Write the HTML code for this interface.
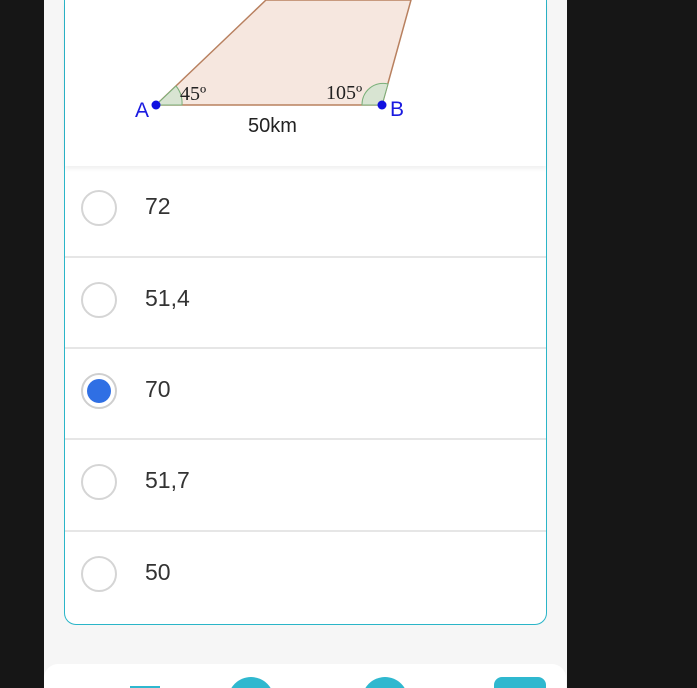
<!DOCTYPE html>
<html><head><meta charset="utf-8"><style>
html,body{margin:0;width:697px;height:688px;overflow:hidden}
body{background:#161616;font-family:"Liberation Sans",sans-serif}
.wrap{position:relative;width:697px;height:688px;overflow:hidden}
.phone{position:absolute;left:44px;top:0;width:523px;height:688px;background:#f6f6f6}
.card{position:absolute;left:64px;top:-20px;width:481px;height:644px;border:1.5px solid #2ab5c8;border-top:none;border-radius:0 0 12px 12px;background:#fff}
.fig{position:absolute;left:0;top:20px;width:481px;height:166px;box-shadow:0 3px 4px rgba(0,0,0,.06)}
.opt{position:absolute;left:0;width:481px;height:90px;border-top:2px solid #e6e6e6}
.r{position:absolute;left:16px;top:24px;width:36px;height:36px;border:2px solid #d5d5d5;border-radius:50%;box-sizing:border-box}
.t{position:absolute;left:80px;top:27px;font-size:23px;color:#333}
.nav{position:absolute;left:44px;top:664px;width:522px;height:40px;background:#fff;border-radius:14px}
</style></head><body><div class="wrap">
<div class="phone"></div>
<div class="card">
<div class="fig">
<svg width="481" height="146" style="position:absolute;left:0;top:0;overflow:visible">
<g transform="translate(-64,0)">
<polygon points="155,105 265,0 410,0 381,105" fill="#f6e7df" stroke="#b8805f" stroke-width="1.5"/>
<path d="M155,105 L175,86 A27 27 0 0 1 181,105 Z" fill="#d8e4d2" stroke="#7ab07a" stroke-width="1"/>
<path d="M381,105 L387,84 A21 21 0 0 0 361,105 Z" fill="#d8e4d2" stroke="#7ab07a" stroke-width="1"/>
<circle cx="155" cy="105" r="4.5" fill="#1010e0"/>
<circle cx="381" cy="105" r="4.5" fill="#1010e0"/>
<text x="134" y="117" font-size="21" fill="#1a1ae0" font-family="Liberation Sans">A</text>
<text x="389" y="116" font-size="21" fill="#1a1ae0" font-family="Liberation Sans">B</text>
<text x="179" y="100" font-size="20" fill="#222" font-family="Liberation Serif">45º</text>
<text x="325" y="99" font-size="20" fill="#222" font-family="Liberation Serif">105º</text>
<text x="247" y="132" font-size="20" fill="#222" font-family="Liberation Sans">50km</text>
</g>
</svg>
</div>
<div class="opt" style="top:186px;border-top:none"><div class="r"></div><div class="t">72</div></div>
<div class="opt" style="top:276px"><div class="r"></div><div class="t">51,4</div></div>
<div class="opt" style="top:367px"><div class="r" style="border-color:#cfcfcf"><div style="position:absolute;left:4px;top:4px;width:24px;height:24px;border-radius:50%;background:#2f6fe4"></div></div><div class="t">70</div></div>
<div class="opt" style="top:458px"><div class="r"></div><div class="t">51,7</div></div>
<div class="opt" style="top:550px"><div class="r"></div><div class="t">50</div></div>
</div>
<div class="nav"></div>
<div style="position:absolute;left:130px;top:686px;width:30px;height:3px;background:#2fb8cf"></div>
<div style="position:absolute;left:228px;top:677px;width:46px;height:30px;border-radius:23px 23px 0 0;background:#2fb8cf"></div>
<div style="position:absolute;left:362px;top:677px;width:46px;height:30px;border-radius:23px 23px 0 0;background:#2fb8cf"></div>
<div style="position:absolute;left:494px;top:677px;width:52px;height:20px;border-radius:8px 8px 0 0;background:#2fb8cf"></div>
</div></body></html>
